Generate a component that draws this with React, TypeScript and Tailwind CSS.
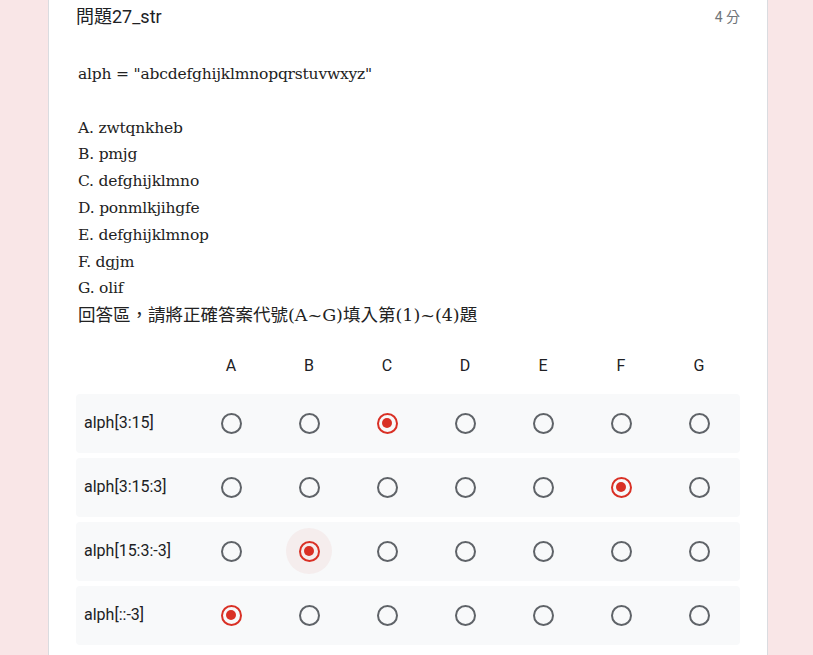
import clsx from 'clsx';

const columns = ['A', 'B', 'C', 'D', 'E', 'F', 'G'];

const rows = [
	{ label: 'alph[3:15]', picked: 2 },
	{ label: 'alph[3:15:3]', picked: 5 },
	{ label: 'alph[15:3:-3]', picked: 1, focused: true },
	{ label: 'alph[::-3]', picked: 0 },
];

const options = [
	'A. zwtqnkheb',
	'B. pmjg',
	'C. defghijklmno',
	'D. ponmlkjihgfe',
	'E. defghijklmnop',
	'F. dgjm',
	'G. olif',
];

function Radio({ checked, focused }: { checked: boolean; focused?: boolean }) {
	return (
		<div
			className={clsx(
				'grid h-[46px] w-[46px] place-items-center rounded-full',
				focused && 'bg-[#f5eded]'
			)}
		>
			<div
				className={clsx(
					'grid h-[21px] w-[21px] place-items-center rounded-full border-2',
					checked ? 'border-[#d93025]' : 'border-[#5f6368]'
				)}
			>
				{checked && <div className="h-[10px] w-[10px] rounded-full bg-[#d93025]" />}
			</div>
		</div>
	);
}

export default function App() {
	return (
		<div className="min-h-screen bg-[#f9e6e7] font-['Roboto','Noto_Sans_CJK_TC',sans-serif]">
			<div className="ml-[48px] w-[720px] border-x border-[#dadce0] bg-white px-[27px] pb-10 pt-[5px]">
				{/* title */}
				<div className="flex items-center justify-between">
					<h2 className="text-[18px] leading-6 text-[#202124]">問題27_str</h2>
					<span className="text-[14px] leading-6 text-[#70757a]">4 分</span>
				</div>

				{/* question image text */}
				<div className="ml-[2px] mt-[32px] font-['DejaVu_Serif','Noto_Sans_CJK_TC',serif] text-[15.5px] leading-[26.8px] tracking-[-0.2px] text-[#222]">
					<p>alph = "abcdefghijklmnopqrstuvwxyz"</p>
					<p>&nbsp;</p>
					{options.map((o) => (
						<p key={o}>{o}</p>
					))}
					<p className="text-[17.5px] tracking-normal">回答區，請將正確答案代號(A~G)填入第(1)~(4)題</p>
				</div>

				{/* grid */}
				<div className="mt-[13px] flex h-[48px] items-center text-[16px] text-[#202124]">
					<div className="w-[116px]" />
					{columns.map((c) => (
						<div key={c} className="w-[78px] text-center">
							{c}
						</div>
					))}
				</div>
				<div className="mt-[4px] flex flex-col gap-[5px]">
					{rows.map((r) => (
						<div key={r.label} className="flex h-[59px] items-center rounded bg-[#f8f9fa]">
							<div className="w-[116px] pl-2 text-[16px] text-[#202124]">{r.label}</div>
							{columns.map((c, i) => (
								<div key={c} className="grid w-[78px] place-items-center">
									<Radio checked={i === r.picked} focused={r.focused && i === r.picked} />
								</div>
							))}
						</div>
					))}
				</div>
			</div>
		</div>
	);
}
